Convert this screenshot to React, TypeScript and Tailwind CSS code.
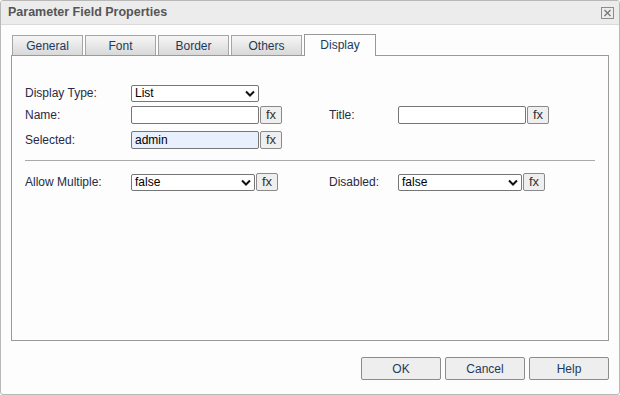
import type { ReactNode } from "react";

const font = { fontFamily: '"Liberation Sans", Arial, sans-serif' };

function Chevron() {
  return (
    <svg width="10" height="7" viewBox="0 0 10 7" className="shrink-0">
      <path d="M1 1.5 L5 5.5 L9 1.5" fill="none" stroke="#111" strokeWidth="2" />
    </svg>
  );
}

function Select({ value, width }: { value: string; width: string }) {
  return (
    <div
      className={`flex h-[17px] items-center justify-between rounded-[2px] border border-[#767676] bg-white pl-[3px] pr-[3px] text-[12px] text-black ${width}`}
    >
      <span>{value}</span>
      <Chevron />
    </div>
  );
}

function Input({ value = "", filled = false }: { value?: string; filled?: boolean }) {
  return (
    <div
      className={`flex h-[18px] w-[128px] items-center rounded-[2px] border border-[#767676] pl-[3px] text-[12px] text-black ${
        filled ? "bg-[#e8f0fe]" : "bg-white"
      }`}
    >
      {value}
    </div>
  );
}

function Fx() {
  return (
    <button
      type="button"
      className="ml-[1px] flex h-[18px] w-[22px] items-center justify-center rounded-[2px] border border-[#8a8a8a] bg-[#efefef] pb-[1px] text-[13px] text-[#333]"
    >
      fx
    </button>
  );
}

function Row({
  label,
  children,
  right,
  className = "",
}: {
  label: string;
  children: ReactNode;
  right?: { label: string; control: ReactNode };
  className?: string;
}) {
  return (
    <div className={`flex items-center ${className}`}>
      <div className="w-[106px] text-[12px] text-[#2a2a44]">{label}</div>
      <div className="flex w-[198px] items-center">{children}</div>
      {right && (
        <>
          <div className="w-[69px] text-[12px] text-[#2a2a44]">{right.label}</div>
          <div className="flex items-center">{right.control}</div>
        </>
      )}
    </div>
  );
}

const tabs = ["General", "Font", "Border", "Others"];

export default function App() {
  return (
    <div
      style={font}
      className="flex h-[395px] w-[620px] flex-col overflow-hidden rounded-[3px] border border-[#b8b8b8] bg-[#fcfdfc]"
    >
      <div className="flex h-[24px] shrink-0 items-center justify-between border-b border-[#d9d9d9] bg-[#ececec] pl-[7px] pr-[5px]">
        <span className="text-[12.5px] font-bold text-[#555]">Parameter Field Properties</span>
        <svg width="13" height="12" viewBox="0 0 13 12">
          <rect x="0.5" y="0.5" width="12" height="11" fill="none" stroke="#8c8c8c" />
          <path d="M3.5 3 L9.5 9 M9.5 3 L3.5 9" stroke="#7a7a7a" strokeWidth="1.4" />
        </svg>
      </div>

      <div className="flex flex-1 flex-col px-[10px] pt-[9px]">
        <div className="flex items-end gap-[2px] pl-[1px]">
          {tabs.map((t) => (
            <div
              key={t}
              className="flex h-[20px] w-[71px] items-center justify-center border border-b-0 border-[#a5a5a5] bg-gradient-to-b from-[#f6f6f6] to-[#d9d9d9] text-[12px] text-[#1e3a5a]"
            >
              {t}
            </div>
          ))}
          <div className="relative z-10 -mb-[1px] flex h-[22px] w-[72px] items-center justify-center border border-b-0 border-[#999] bg-[#fcfdfc] pb-[2px] text-[12px] text-[#1e3a5a]">
            Display
          </div>
        </div>

        <div className="flex h-[286px] flex-col border border-[#9a9a9a] px-[13px] pt-[28px]">
          <Row label="Display Type:">
            <Select value="List" width="w-[128px]" />
          </Row>
          <Row
            label="Name:"
            className="mt-[4px]"
            right={{
              label: "Title:",
              control: (
                <>
                  <Input />
                  <Fx />
                </>
              ),
            }}
          >
            <Input />
            <Fx />
          </Row>
          <Row label="Selected:" className="mt-[7px]">
            <Input value="admin" filled />
            <Fx />
          </Row>

          <div className="mt-[11px] h-px w-[570px] bg-[#a9a9a9]" />

          <Row
            label="Allow Multiple:"
            className="mt-[12px]"
            right={{
              label: "Disabled:",
              control: (
                <>
                  <Select value="false" width="w-[124px]" />
                  <Fx />
                </>
              ),
            }}
          >
            <Select value="false" width="w-[124px]" />
            <Fx />
          </Row>
        </div>

        <div className="mt-[16px] flex justify-end gap-[4px]">
          {["OK", "Cancel", "Help"].map((b) => (
            <button
              key={b}
              type="button"
              className="flex h-[23px] w-[80px] items-center justify-center rounded-[2px] border border-[#8c8c8c] bg-[#eeeeee] text-[12px] text-[#1e3a5a]"
            >
              {b}
            </button>
          ))}
        </div>
      </div>
    </div>
  );
}
